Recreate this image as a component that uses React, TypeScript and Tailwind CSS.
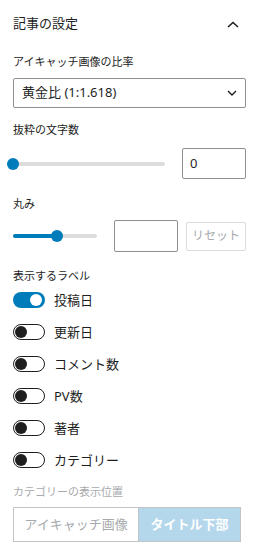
import React from "react";

const font = { fontFamily: '"Noto Sans", "Noto Sans CJK JP", sans-serif' };

function Toggle({ on, label }: { on?: boolean; label: string }) {
  return (
    <div className="flex h-[32px] items-center">
      {on ? (
        <div className="relative h-[16px] w-[32px] rounded-full bg-[#007cba]">
          <div className="absolute right-[3px] top-[2px] h-[12px] w-[12px] rounded-full bg-white" />
        </div>
      ) : (
        <div className="relative h-[16px] w-[32px] rounded-full border border-[#1e1e1e] bg-white">
          <div className="absolute left-[1px] top-[1px] h-[12px] w-[12px] rounded-full bg-[#1e1e1e]" />
        </div>
      )}
      <span className="ml-[9px] text-[13px] leading-4 text-[#1e1e1e]">{label}</span>
    </div>
  );
}

export default function App() {
  return (
    <div className="h-[554px] w-[261px] overflow-hidden bg-white" style={font}>
      <div className="flex h-[48px] items-center justify-between pl-[13px] pr-[22px]">
        <span className="text-[13px] font-normal text-[#1e1e1e]">記事の設定</span>
        <svg width="12" height="7" viewBox="0 0 12 7" fill="none">
          <path d="M1 6 L6 1.5 L11 6" stroke="#1e1e1e" strokeWidth="1.6" />
        </svg>
      </div>
      <div className="flex flex-col pl-[13px] pr-[15px]">
        <div className="mt-[6px] text-[11px] leading-4 text-[#1e1e1e]">アイキャッチ画像の比率</div>
        <div className="mt-[8px] flex h-[30px] items-center justify-between rounded-[2px] border border-[#8c8f94] pl-[8px] pr-[8px]">
          <span className="text-[13px] text-[#1e1e1e]">黄金比 (1:1.618)</span>
          <svg width="10" height="6" viewBox="0 0 10 6" fill="none">
            <path d="M1 1 L5 5 L9 1" stroke="#1e1e1e" strokeWidth="1.4" />
          </svg>
        </div>

        <div className="mt-[14px] text-[11px] leading-4 text-[#1e1e1e]">抜粋の文字数</div>
        <div className="mt-[10px] flex h-[31px] items-center">
          <div className="relative h-[4px] w-[152px] rounded-full bg-[#dddddd]">
            <div className="absolute left-[-6px] top-[-4px] h-[12px] w-[12px] rounded-full bg-[#007cba]" />
          </div>
          <div className="ml-[17px] flex h-[31px] w-[64px] items-center rounded-[2px] border border-[#8c8f94] pl-[7px] text-[13px] text-[#1e1e1e]">
            0
          </div>
        </div>

        <div className="mt-[17px] text-[11px] leading-4 text-[#1e1e1e]">丸み</div>
        <div className="mt-[8px] flex h-[32px] items-center">
          <div className="relative h-[4px] w-[84px] rounded-full bg-[#dddddd]">
            <div className="absolute left-0 top-0 h-[4px] w-[44px] rounded-full bg-[#007cba]" />
            <div className="absolute left-[38px] top-[-4px] h-[12px] w-[12px] rounded-full bg-[#007cba]" />
          </div>
          <div className="ml-[17px] h-[32px] w-[64px] rounded-[2px] border border-[#8c8f94]" />
          <div className="ml-[8px] flex h-[29px] w-[60px] items-center justify-center rounded-[2px] border border-[#dcdcde] text-[12px] text-[#a7aaad]">
            リセット
          </div>
        </div>

        <div className="mt-[16px] text-[11px] leading-4 text-[#1e1e1e]">表示するラベル</div>
        <Toggle on label="投稿日" />
        <Toggle label="更新日" />
        <Toggle label="コメント数" />
        <Toggle label="PV数" />
        <Toggle label="著者" />
        <Toggle label="カテゴリー" />

        <div className="mt-[8px] text-[11px] leading-4 text-[#a7aaad]">カテゴリーの表示位置</div>
        <div className="mt-[7px] flex h-[35px] w-[228px]">
          <div className="flex w-[126px] items-center justify-center border border-[#c3c4c7] bg-white text-[13px] text-[#a7aaad]">
            アイキャッチ画像
          </div>
          <div className="flex flex-1 items-center justify-center border border-l-0 border-[#c3c4c7] bg-[#b4d7ec] text-[13px] font-bold text-white">
            タイトル下部
          </div>
        </div>
      </div>
    </div>
  );
}
